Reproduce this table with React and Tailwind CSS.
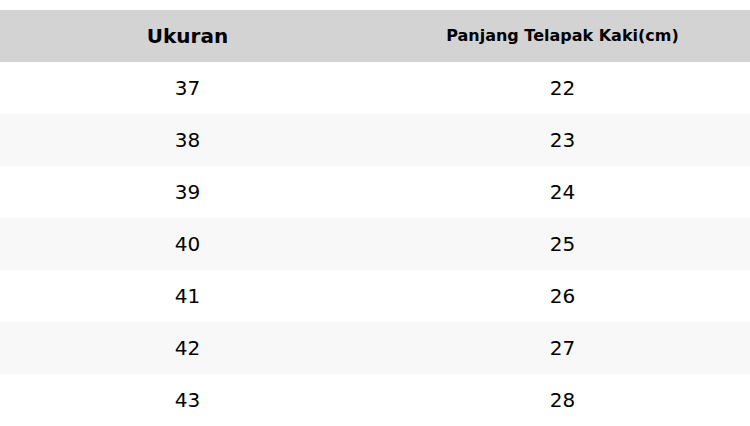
import React from "react";

const rows = [
  ["37", "22"],
  ["38", "23"],
  ["39", "24"],
  ["40", "25"],
  ["41", "26"],
  ["42", "27"],
  ["43", "28"],
];

export default function App() {
  return (
    <div className="w-[750px] h-[426px] bg-white pt-[10px] text-black font-['DejaVu_Sans',sans-serif] overflow-hidden">
      <div className="grid grid-cols-2 h-[52px] bg-[#d3d3d3] items-center text-center font-bold">
        <div className="text-[20px]">Ukuran</div>
        <div className="text-[16px]">Panjang Telapak Kaki(cm)</div>
      </div>
      {rows.map(([size, len], i) => (
        <div
          key={size}
          className={`grid grid-cols-2 h-[52px] items-center text-center text-[20px] ${i % 2 ? "bg-[#f8f8f8]" : "bg-white"}`}
        >
          <div>{size}</div>
          <div>{len}</div>
        </div>
      ))}
    </div>
  );
}
